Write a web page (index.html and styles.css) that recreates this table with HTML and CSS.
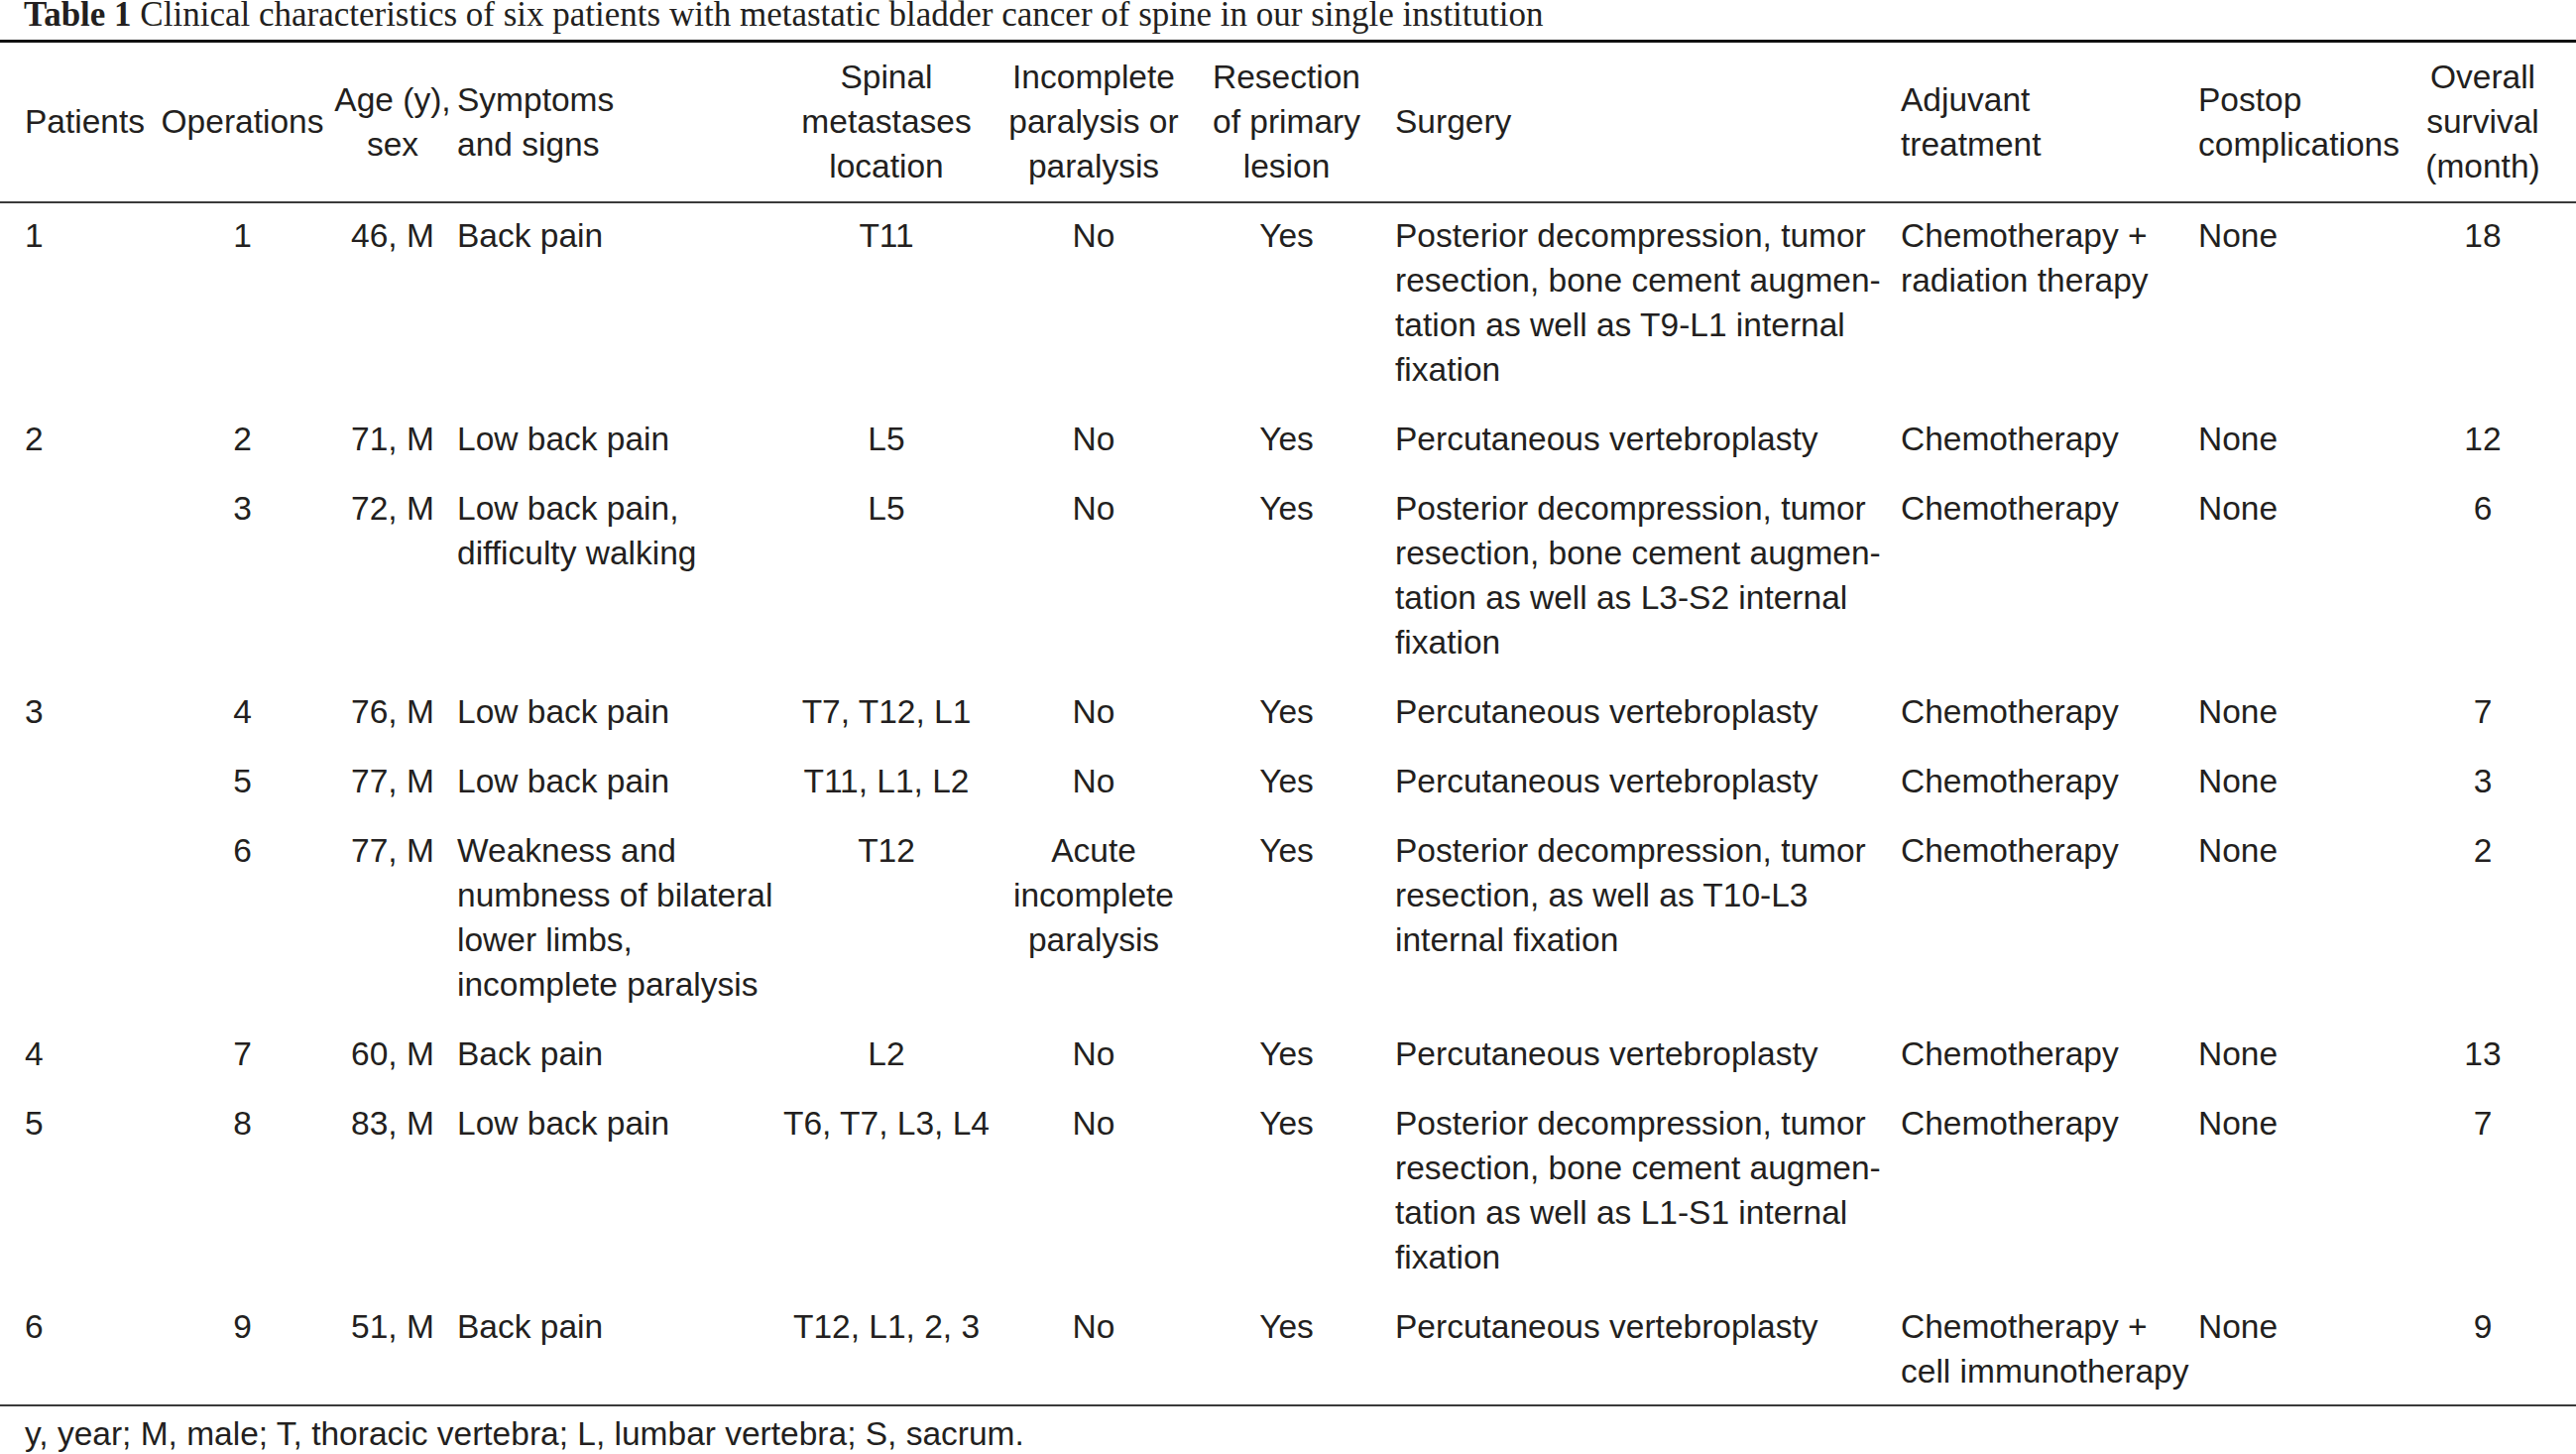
FILE: index.html
```html
<!DOCTYPE html>
<html lang="en">
<head>
<meta charset="utf-8">
<title>Table 1</title>
<link rel="stylesheet" href="styles.css">
</head>
<body>
<div class="page">
  <p class="caption"><b>Table 1</b> Clinical characteristics of six patients with metastatic bladder cancer of spine in our single institution</p>
  <table class="tbl">
    <colgroup>
      <col class="w-pat"><col class="w-op"><col class="w-age"><col class="w-sym"><col class="w-loc"><col class="w-par"><col class="w-res"><col class="w-sur"><col class="w-adj"><col class="w-post"><col class="w-surv">
    </colgroup>
    <thead>
      <tr>
        <th class="c-pat">Patients</th>
        <th class="c-mid">Operations</th>
        <th class="c-mid">Age (y),<br>sex</th>
        <th class="c-left">Symptoms<br>and signs</th>
        <th class="c-mid">Spinal<br>metastases<br>location</th>
        <th class="c-mid">Incomplete<br>paralysis or<br>paralysis</th>
        <th class="c-mid">Resection<br>of primary<br>lesion</th>
        <th class="c-sur">Surgery</th>
        <th class="c-left">Adjuvant<br>treatment</th>
        <th class="c-left">Postop<br>complications</th>
        <th class="c-surv">Overall<br>survival<br>(month)</th>
      </tr>
    </thead>
    <tbody>
      <tr>
        <td class="c-pat">1</td><td class="c-mid">1</td><td class="c-mid">46, M</td><td class="c-left">Back pain</td><td class="c-mid">T11</td><td class="c-mid">No</td><td class="c-mid">Yes</td>
        <td class="c-sur">Posterior decompression, tumor<br>resection, bone cement augmen-<br>tation as well as T9-L1 internal<br>fixation</td>
        <td class="c-left">Chemotherapy +<br>radiation therapy</td><td class="c-left">None</td><td class="c-surv">18</td>
      </tr>
      <tr>
        <td class="c-pat">2</td><td class="c-mid">2</td><td class="c-mid">71, M</td><td class="c-left">Low back pain</td><td class="c-mid">L5</td><td class="c-mid">No</td><td class="c-mid">Yes</td>
        <td class="c-sur">Percutaneous vertebroplasty</td>
        <td class="c-left">Chemotherapy</td><td class="c-left">None</td><td class="c-surv">12</td>
      </tr>
      <tr>
        <td class="c-pat"></td><td class="c-mid">3</td><td class="c-mid">72, M</td><td class="c-left">Low back pain,<br>difficulty walking</td><td class="c-mid">L5</td><td class="c-mid">No</td><td class="c-mid">Yes</td>
        <td class="c-sur">Posterior decompression, tumor<br>resection, bone cement augmen-<br>tation as well as L3-S2 internal<br>fixation</td>
        <td class="c-left">Chemotherapy</td><td class="c-left">None</td><td class="c-surv">6</td>
      </tr>
      <tr>
        <td class="c-pat">3</td><td class="c-mid">4</td><td class="c-mid">76, M</td><td class="c-left">Low back pain</td><td class="c-mid">T7, T12, L1</td><td class="c-mid">No</td><td class="c-mid">Yes</td>
        <td class="c-sur">Percutaneous vertebroplasty</td>
        <td class="c-left">Chemotherapy</td><td class="c-left">None</td><td class="c-surv">7</td>
      </tr>
      <tr>
        <td class="c-pat"></td><td class="c-mid">5</td><td class="c-mid">77, M</td><td class="c-left">Low back pain</td><td class="c-mid">T11, L1, L2</td><td class="c-mid">No</td><td class="c-mid">Yes</td>
        <td class="c-sur">Percutaneous vertebroplasty</td>
        <td class="c-left">Chemotherapy</td><td class="c-left">None</td><td class="c-surv">3</td>
      </tr>
      <tr>
        <td class="c-pat"></td><td class="c-mid">6</td><td class="c-mid">77, M</td><td class="c-left">Weakness and<br>numbness of bilateral<br>lower limbs,<br>incomplete paralysis</td><td class="c-mid">T12</td><td class="c-mid">Acute<br>incomplete<br>paralysis</td><td class="c-mid">Yes</td>
        <td class="c-sur">Posterior decompression, tumor<br>resection, as well as T10-L3<br>internal fixation</td>
        <td class="c-left">Chemotherapy</td><td class="c-left">None</td><td class="c-surv">2</td>
      </tr>
      <tr>
        <td class="c-pat">4</td><td class="c-mid">7</td><td class="c-mid">60, M</td><td class="c-left">Back pain</td><td class="c-mid">L2</td><td class="c-mid">No</td><td class="c-mid">Yes</td>
        <td class="c-sur">Percutaneous vertebroplasty</td>
        <td class="c-left">Chemotherapy</td><td class="c-left">None</td><td class="c-surv">13</td>
      </tr>
      <tr>
        <td class="c-pat">5</td><td class="c-mid">8</td><td class="c-mid">83, M</td><td class="c-left">Low back pain</td><td class="c-mid">T6, T7, L3, L4</td><td class="c-mid">No</td><td class="c-mid">Yes</td>
        <td class="c-sur">Posterior decompression, tumor<br>resection, bone cement augmen-<br>tation as well as L1-S1 internal<br>fixation</td>
        <td class="c-left">Chemotherapy</td><td class="c-left">None</td><td class="c-surv">7</td>
      </tr>
      <tr class="last">
        <td class="c-pat">6</td><td class="c-mid">9</td><td class="c-mid">51, M</td><td class="c-left">Back pain</td><td class="c-mid">T12, L1, 2, 3</td><td class="c-mid">No</td><td class="c-mid">Yes</td>
        <td class="c-sur">Percutaneous vertebroplasty</td>
        <td class="c-left">Chemotherapy +<br>cell immunotherapy</td><td class="c-left">None</td><td class="c-surv">9</td>
      </tr>
    </tbody>
  </table>
  <p class="note">y, year; M, male; T, thoracic vertebra; L, lumbar vertebra; S, sacrum.</p>
</div>
</body>
</html>
```

FILE: styles.css
```css
html, body {
  margin: 0;
  padding: 0;
  background: #ffffff;
}

.page {
  width: 2598px;
  color: #231f20;
}

.caption {
  margin: 0 0 10px 0;
  padding-left: 24px;
  font-family: "Liberation Serif", "Times New Roman", serif;
  font-size: 35px;
  line-height: 30px;
  white-space: nowrap;
}

.caption b {
  font-weight: bold;
}

.tbl {
  width: 2598px;
  table-layout: fixed;
  border-collapse: collapse;
  font-family: "Liberation Sans", Arial, Helvetica, sans-serif;
  font-size: 33.5px;
  line-height: 45px;
}

.w-pat { width: 158px; }
.w-op { width: 173px; }
.w-age { width: 130px; }
.w-sym { width: 323px; }
.w-loc { width: 220px; }
.w-par { width: 198px; }
.w-res { width: 191px; }
.w-sur { width: 524px; }
.w-adj { width: 300px; }
.w-post { width: 217px; }
.w-surv { width: 164px; }

.tbl th,
.tbl td {
  padding: 0;
  white-space: nowrap;
  font-weight: normal;
}

.tbl thead th {
  padding-top: 12px;
  padding-bottom: 13px;
  vertical-align: middle;
  border-top: 3px solid #111111;
  border-bottom: 2px solid #3a3a3a;
}

.tbl tbody td {
  padding-top: 10px;
  padding-bottom: 15px;
  vertical-align: top;
}

.tbl tbody tr.last td {
  padding-bottom: 11px;
  border-bottom: 2px solid #3a3a3a;
}

.c-pat {
  text-align: left;
  padding-left: 25px !important;
}

.c-mid {
  text-align: center;
}

.c-left {
  text-align: left;
}

.c-sur {
  text-align: left;
  padding-left: 14px !important;
}

.c-surv {
  text-align: center;
  padding-right: 24px !important;
}

.note {
  margin: 5px 0 0 0;
  padding-left: 25px;
  font-family: "Liberation Sans", Arial, Helvetica, sans-serif;
  font-size: 33.5px;
  line-height: 45px;
  white-space: nowrap;
}
```
